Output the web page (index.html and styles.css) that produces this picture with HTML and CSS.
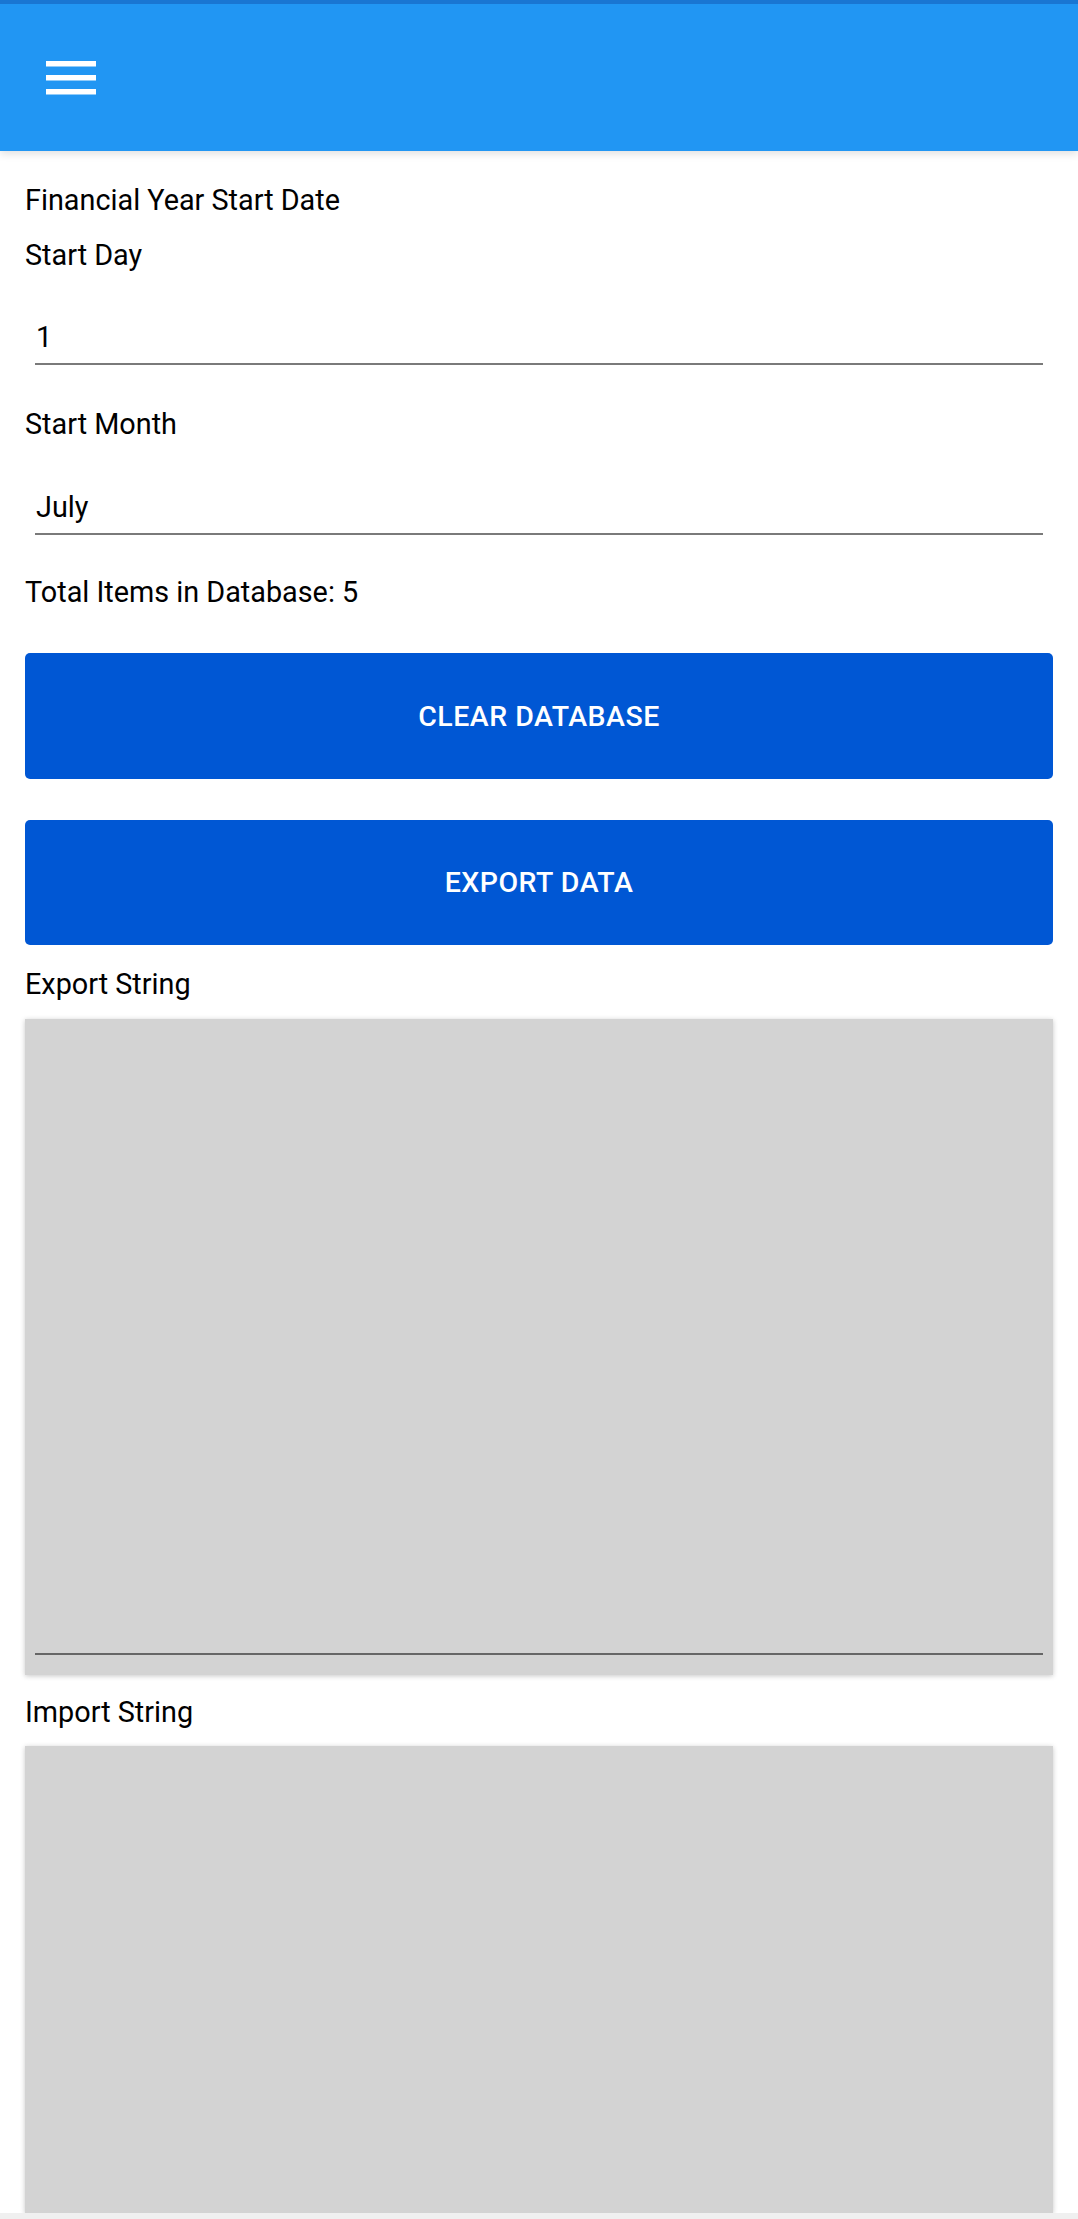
FILE: index.html
```html
<!DOCTYPE html>
<html>
<head>
<meta charset="utf-8">
<link rel="stylesheet" href="styles.css">
</head>
<body>
<header class="toolbar">
  <svg class="menu-icon" width="50" height="34" viewBox="0 0 50 34" aria-hidden="true">
    <rect x="0" y="0" width="50" height="5.5" fill="#fff"/>
    <rect x="0" y="14" width="50" height="5.5" fill="#fff"/>
    <rect x="0" y="28" width="50" height="5.5" fill="#fff"/>
  </svg>
</header>
<main class="content">
  <div class="text title">Financial Year Start Date</div>
  <div class="text label">Start Day</div>
  <div class="field"><span class="field-value">1</span></div>
  <div class="text label label-after-field">Start Month</div>
  <div class="field field-2"><span class="field-value">July</span></div>
  <div class="text total">Total Items in Database: 5</div>
  <button class="btn btn-first">Clear Database</button>
  <button class="btn btn-second">Export Data</button>
  <div class="text box-label">Export String</div>
  <div class="textbox export-box"><div class="textbox-area"></div></div>
  <div class="text box-label box-label-2">Import String</div>
  <div class="textbox import-box"></div>
</main>
<div class="bottom-strip"></div>
</body>
</html>
```
FILE: styles.css
```css
html, body {
  margin: 0;
  padding: 0;
  background: #ffffff;
}
body {
  font-family: Roboto, "Noto Sans", "Liberation Sans", sans-serif;
  color: #000;
  width: 1078px;
  height: 2219px;
  overflow: hidden;
  display: flex;
  flex-direction: column;
}
.toolbar {
  box-sizing: border-box;
  height: 151px;
  border-top: 4px solid #1976d2;
  background: #2196f3;
  display: flex;
  align-items: center;
  padding-left: 46px;
  box-shadow: 0 3px 8px rgba(0, 0, 0, 0.12);
  position: relative;
  z-index: 2;
  flex: none;
}
.menu-icon {
  display: block;
}
.content {
  flex: 1;
  padding: 29px 25px 0 25px;
  display: flex;
  flex-direction: column;
  min-height: 0;
}
.text {
  font-size: 28.8px;
  line-height: 40px;
  height: 40px;
}
.label {
  margin-top: 15px;
}
.label-after-field {
  margin-top: 39px;
}
.field {
  margin: 0 10px;
  padding: 42px 0 6px 1px;
  border-bottom: 2.5px solid #7a7a7a;
  font-size: 28.8px;
  line-height: 40px;
  height: 40px;
}
.field-2 {
  padding-top: 43px;
}
.total {
  margin-top: 37px;
}
.btn {
  display: flex;
  align-items: center;
  justify-content: center;
  width: 100%;
  border: none;
  border-radius: 5px;
  background: #0057d4;
  color: #fff;
  font-family: Roboto, "Noto Sans", "Liberation Sans", sans-serif;
  font-weight: 500;
  font-size: 28.5px;
  letter-spacing: 0.5px;
  text-transform: uppercase;
  height: 126px;
  padding: 0;
  flex: none;
}
.btn-first {
  margin-top: 41px;
}
.btn-second {
  margin-top: 41px;
  height: 125px;
}
.box-label {
  margin-top: 19px;
}
.box-label-2 {
  margin-top: 17px;
}
.textbox {
  background: #d3d3d3;
  box-shadow: 0 1px 5px rgba(0, 0, 0, 0.22);
  flex: none;
}
.export-box {
  margin-top: 15px;
  height: 656px;
  box-sizing: border-box;
  padding: 0 10px 20px 10px;
  display: flex;
  flex-direction: column;
}
.textbox-area {
  flex: 1;
  border-bottom: 2.5px solid #666666;
}
.import-box {
  margin-top: 14px;
  flex: 1;
  min-height: 0;
}
.bottom-strip {
  height: 6px;
  background: #f0f0f0;
  flex: none;
  position: relative;
  z-index: 2;
}
```
